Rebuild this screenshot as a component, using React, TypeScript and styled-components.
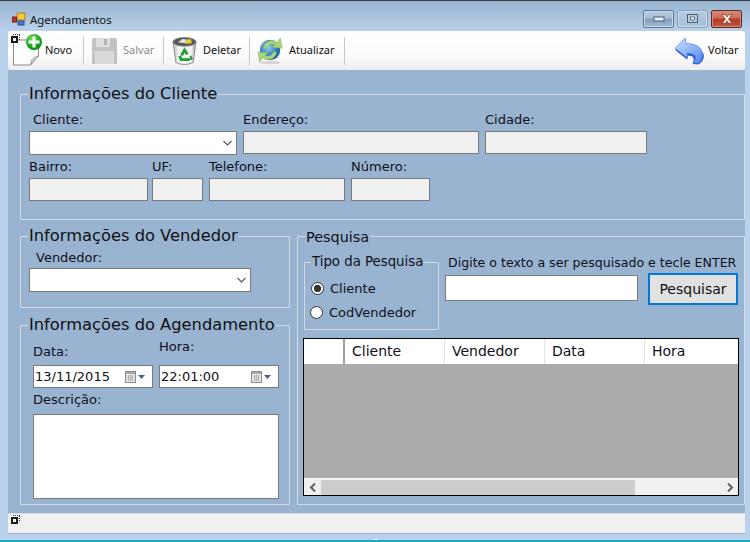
import React from "react";
import styled, { createGlobalStyle } from "styled-components";

const Global = createGlobalStyle`
  html, body { margin: 0; padding: 0; background: #b9d1ea; }
  * { box-sizing: border-box; }
`;

const Win = styled.div`
  position: relative;
  width: 750px;
  height: 542px;
  overflow: hidden;
  display: flex;
  flex-direction: column;
  background: #b9d1ea;
  border-top: 1px solid #3a3f45;
  border-bottom: 2px solid #1aa6c4;
  font-family: "DejaVu Sans", Verdana, sans-serif;
  color: #101018;
`;
const TitleBar = styled.div`
  height: 30px;
  flex: none;
  display: flex;
  align-items: flex-start;
  padding: 11px 8px 0 12px;
  background: linear-gradient(#98b4d0, #b9d1ea);
  font-family: "Noto Sans", sans-serif;
  font-size: 11.4px;
`;
const TitleText = styled.span`
  margin-left: 4px;
  line-height: 16px;
  color: #111;
  flex: 1;
`;
const CaptionGroup = styled.div`
  display: flex;
  gap: 3px;
  margin-top: -2px;
`;
const Caption = styled.div<{ $kind: "min" | "max" | "close" }>`
  width: 31px;
  height: 18px;
  border-radius: 2px;
  display: flex;
  align-items: center;
  justify-content: center;
  border: 1px solid ${(p) => (p.$kind === "close" ? "#5f2a2a" : p.$kind === "min" ? "#5d7690" : "#8aa2ba")};
  box-shadow: inset 0 0 0 1px ${(p) => (p.$kind === "close" ? "#d88a78" : "#c6d8ea")};
  background: ${(p) =>
    p.$kind === "close"
      ? "linear-gradient(#d98f80 0, #c86a56 45%, #b23c22 50%, #c4543a 100%)"
      : p.$kind === "min"
      ? "linear-gradient(#b9cde0 0, #a6bed6 45%, #7f9dbb 50%, #a4bcd4 100%)"
      : "linear-gradient(#b4cbe1 0, #a8c0d9 100%)"};
`;
const Toolbar = styled.div`
  height: 39px;
  flex: none;
  margin: 0 5px 0 8px;
  border-radius: 3px;
  display: flex;
  align-items: center;
  background: linear-gradient(#ffffff 0, #fbfbfb 60%, #eeeeee 100%);
  font-family: "Noto Sans", sans-serif;
  font-size: 11px;
`;
const ToolItem = styled.div<{ $w: number; $gap: number; $pad: number; $off?: boolean }>`
  width: ${(p) => p.$w}px;
  height: 100%;
  flex: none;
  display: flex;
  align-items: center;
  gap: ${(p) => p.$gap}px;
  padding-left: ${(p) => p.$pad}px;
  color: ${(p) => (p.$off ? "#8d8d8d" : "#111")};
`;
const ToolText = styled.span`
  margin-top: -2px;
`;
const ToolSep = styled.div`
  width: 1px;
  height: 28px;
  flex: none;
  background: #c4c6c8;
  box-shadow: 1px 0 0 #fff;
`;
const ToolSpacer = styled.div`
  flex: 1;
`;
const Grip = styled.svg<{ $left: number; $top: number }>`
  position: absolute;
  left: ${(p) => p.$left}px;
  top: ${(p) => p.$top}px;
`;
const Body = styled.div`
  flex: 1;
  min-height: 0;
  margin: 0 5px 0 8px;
  padding: 14px 0 0 12px;
  background: #99b4d1;
  display: flex;
  flex-direction: column;
  gap: 6px;
`;
const Group = styled.fieldset<{ $h: number; $w?: number; $pt?: number; $pl?: number }>`
  margin: 0;
  padding: ${(p) => p.$pt ?? 8}px 0 0 ${(p) => p.$pl ?? 8}px;
  min-width: 0;
  height: ${(p) => p.$h}px;
  width: ${(p) => (p.$w ? `${p.$w}px` : "auto")};
  flex: none;
  border: 1px solid #d3dbe3;
  border-radius: 1px;
`;
const BigLegend = styled.legend`
  margin-left: -1px;
  padding: 0 1px;
  font-size: 16.3px;
  line-height: 20px;
  color: #111;
  white-space: nowrap;
`;
const MidLegend = styled.legend`
  margin-left: 7px;
  padding: 2px 1px 0;
  font-size: 14.4px;
  line-height: 18px;
`;
const SmallLegend = styled.legend`
  margin-left: 0;
  padding: 0 1px;
  font-size: 13.3px;
  line-height: 16px;
  white-space: nowrap;
`;
const FieldRow = styled.div<{ $h: number }>`
  display: flex;
  height: ${(p) => p.$h}px;
  align-items: flex-start;
`;
const Field = styled.div<{ $w: number; $ml?: number; $lift?: number }>`
  width: ${(p) => p.$w}px;
  margin-left: ${(p) => p.$ml ?? 0}px;
  margin-top: ${(p) => -(p.$lift ?? 0)}px;
  flex: none;
`;
const Label = styled.div<{ $indent?: number; $gap?: number; $top?: number }>`
  font-size: 13px;
  line-height: 16px;
  height: 16px;
  white-space: nowrap;
  padding-left: ${(p) => p.$indent ?? 0}px;
  margin-top: ${(p) => p.$top ?? 0}px;
  margin-bottom: ${(p) => p.$gap ?? 3}px;
`;
const ReadOnly = styled.div<{ $h?: number }>`
  height: ${(p) => p.$h ?? 23}px;
  background: #f0f0f0;
  border: 1px solid #7a7a7a;
`;
const Combo = styled.div`
  height: 24px;
  background: #fff;
  border: 1px solid #7a7a7a;
  display: flex;
  align-items: center;
  justify-content: flex-end;
  padding-right: 4px;
`;
const DateBox = styled.div`
  height: 23px;
  width: 120px;
  background: #fff;
  border: 1px solid #7a7a7a;
  display: flex;
  align-items: center;
  padding: 0 6px 0 1px;
  font-size: 13px;
  justify-content: space-between;
`;
const Memo = styled.div`
  width: 246px;
  height: 85px;
  background: #fff;
  border: 1px solid #7a7a7a;
`;
const Columns = styled.div`
  display: flex;
  gap: 7px;
`;
const LeftCol = styled.div`
  width: 270px;
  flex: none;
  display: flex;
  flex-direction: column;
  gap: 7px;
`;
const DateRow = styled.div`
  display: flex;
  gap: 6px;
  padding-left: 4px;
`;
const SearchTop = styled.div`
  display: flex;
  align-items: flex-start;
`;
const TipoGroup = styled.fieldset`
  margin: 0 0 0 6px;
  padding: 6px 0 0 6px;
  width: 135px;
  height: 76px;
  flex: none;
  border: 1px solid #d3dbe3;
  border-radius: 1px;
  min-width: 0;
`;
const RadioRow = styled.label<{ $ml?: number }>`
  display: flex;
  align-items: center;
  gap: 6px;
  height: 24px;
  font-size: 13px;
  margin-left: ${(p) => p.$ml ?? 0}px;
`;
const RadioDot = styled.span<{ $on?: boolean }>`
  width: 13px;
  height: 13px;
  flex: none;
  border-radius: 50%;
  border: 1px solid #333;
  background: ${(p) => (p.$on ? "radial-gradient(circle, #333 0 3.4px, #fff 3.9px)" : "#fff")};
`;
const SearchBlock = styled.div`
  margin-left: 6px;
`;
const SearchLabel = styled.div`
  font-size: 12.57px;
  line-height: 16px;
  margin: 1px 0 0 3px;
  white-space: nowrap;
`;
const SearchLine = styled.div`
  display: flex;
  align-items: center;
  gap: 10px;
`;
const SearchInput = styled.div`
  width: 193px;
  height: 26px;
  background: #fff;
  border: 1px solid #7a7a7a;
`;
const SearchBtn = styled.div`
  width: 90px;
  height: 32px;
  margin-top: 2px;
  background: #e1e1e1;
  border: 2px solid #0078d7;
  font-size: 14px;
  display: flex;
  align-items: center;
  justify-content: center;
`;
const Grid = styled.div`
  margin: 8px 0 0 5px;
  width: 436px;
  height: 158px;
  border: 1px solid #000;
  background: #ababab;
  display: flex;
  flex-direction: column;
`;
const GridHead = styled.div`
  height: 25px;
  flex: none;
  display: flex;
  background: #fff;
`;
const GridCell = styled.div<{ $w: number; $strong?: boolean; $last?: boolean }>`
  width: ${(p) => p.$w}px;
  flex: none;
  padding-left: 7px;
  font-size: 14px;
  line-height: 25px;
  border-right: ${(p) => (p.$last ? "none" : p.$strong ? "2px solid #a0a0a0" : "1px solid #e3e3e3")};
`;
const GridFill = styled.div`
  flex: 1;
`;
const ScrollBar = styled.div`
  height: 17px;
  flex: none;
  display: flex;
  align-items: center;
  background: #f0f0f0;
  border-top: 1px solid #fff;
`;
const ScrollBtn = styled.div`
  width: 17px;
  height: 100%;
  flex: none;
  display: flex;
  align-items: center;
  justify-content: center;
`;
const ScrollThumb = styled.div`
  width: 314px;
  height: 15px;
  background: #cdcdcd;
  flex: none;
`;
const ScrollRest = styled.div`
  flex: 1;
`;
const StatusBar = styled.div`
  height: 21px;
  flex: none;
  margin: 0 5px 0 8px;
  background: #f0f0f0;
  border-top: 1px solid #d8dce0;
  border-bottom: 1px solid #9fb6cf;
`;
const FrameFoot = styled.div`
  flex: none;
  height: 6px;
`;
const Blip = styled.div`
  position: absolute;
  left: 373px;
  bottom: 0;
  width: 5px;
  height: 1px;
  background: #fff;
`;

const AppIcon = () => (
  <svg width="14" height="14" viewBox="0 0 14 14">
    <rect x="5" y="1" width="8" height="7" fill="#f6c93c" stroke="#a8802a" />
    <rect x="0.5" y="5" width="4" height="5" fill="#c8302a" stroke="#7a2020" />
    <rect x="6" y="9" width="6" height="4" fill="#4a78d0" stroke="#2a4a90" />
  </svg>
);
const MinGlyph = () => (
  <svg width="12" height="6" viewBox="0 0 12 6">
    <rect x="1" y="1" width="10" height="4" fill="#eef3f8" stroke="#4d5d70" />
  </svg>
);
const MaxGlyph = () => (
  <svg width="12" height="10" viewBox="0 0 12 10">
    <rect x="0.5" y="0.5" width="10" height="8" fill="#b7cce0" stroke="#4d5d70" />
    <rect x="3.5" y="3" width="4" height="3" fill="#e6eef6" stroke="#4d5d70" strokeWidth="0.8" />
  </svg>
);
const CloseGlyph = () => (
  <svg width="14" height="10" viewBox="0 0 14 10">
    <path d="M2 0.5 L5 0.5 L7 3 L9 0.5 L12 0.5 L8.6 5 L12 9.5 L9 9.5 L7 7 L5 9.5 L2 9.5 L5.4 5 Z" fill="#f6efec" stroke="#6a2a20" strokeWidth="0.6" />
  </svg>
);
const GripIcon = ({ left, top }: { left: number; top: number }) => (
  <Grip $left={left} $top={top} width="11" height="11" viewBox="0 0 11 11">
    <rect x="2" y="4" width="5" height="5" fill="#fff" stroke="#1a1a1a" strokeWidth="2" />
    <path d="M3 1.5h8M9.5 2v6" stroke="#333" strokeWidth="1" strokeDasharray="1 1" fill="none" />
  </Grip>
);
const NewIcon = () => (
  <svg width="31" height="33" viewBox="0 0 31 33" style={{ marginTop: -2 }}>
    <defs>
      <radialGradient id="gr" cx="0.4" cy="0.3" r="0.8">
        <stop offset="0" stopColor="#7be05a" />
        <stop offset="0.6" stopColor="#16a81c" />
        <stop offset="1" stopColor="#067a12" />
      </radialGradient>
    </defs>
    <path d="M1.5 7 H26.5 V23 L18.5 32 H1.5 Z" fill="#fdfdfd" stroke="#8a8a8a" />
    <path d="M26.5 23 C24 24 19 24 18.5 32 C20 28 23 28 26.5 23 Z" fill="#d6d6d6" stroke="#8a8a8a" strokeWidth="0.7" />
    <circle cx="22" cy="9" r="8" fill="url(#gr)" />
    <path d="M20.5 3.5h3v4h4v3h-4v4h-3v-4h-4v-3h4z" fill="#fff" />
  </svg>
);
const SaveIcon = () => (
  <svg width="25" height="26" viewBox="0 0 25 26">
    <path d="M0 2 Q0 0 2 0 H23 Q25 0 25 2 V26 H0 Z" fill="#c2c2c2" />
    <rect x="4" y="0" width="14" height="9" fill="#dedede" />
    <rect x="3" y="13" width="19" height="13" fill="#dadada" />
    <rect x="12" y="1" width="3" height="6" fill="#b4b4b4" />
  </svg>
);
const BinIcon = () => (
  <svg width="25" height="30" viewBox="0 0 26 30">
    <defs>
      <linearGradient id="bn" x1="0" x2="1">
        <stop offset="0" stopColor="#b9b9b9" />
        <stop offset="0.3" stopColor="#fff" />
        <stop offset="0.8" stopColor="#f0f0f0" />
        <stop offset="1" stopColor="#999" />
      </linearGradient>
    </defs>
    <path d="M1 5 L4 27 Q13 31 22 27 L25 5 Z" fill="url(#bn)" stroke="#777" strokeWidth="0.8" />
    <ellipse cx="13" cy="5.5" rx="12" ry="4.5" fill="#555" stroke="#8a8a8a" />
    <path d="M6 6 L11 2.5 L15 3 L14 7 Z" fill="#dce4ee" />
    <path d="M15 3 L20 2.8 L20.5 7 L14 7.5 Z" fill="#e8d22a" />
    <g stroke="#1fa033" strokeWidth="3" fill="none">
      <path d="M10 19.5 L13 14 L16 18.5" />
      <path d="M8 20 L9.5 24 H18" />
      <path d="M19 20 L20.5 23 L17 24" strokeWidth="2" />
    </g>
  </svg>
);
const RefreshIcon = () => (
  <svg width="26" height="28" viewBox="0 0 28 30">
    <defs>
      <radialGradient id="gl" cx="0.4" cy="0.35" r="0.7">
        <stop offset="0" stopColor="#9fd0f0" />
        <stop offset="0.6" stopColor="#2f7fc8" />
        <stop offset="1" stopColor="#1a4f98" />
      </radialGradient>
    </defs>
    <ellipse cx="14" cy="27.5" rx="11" ry="1.8" fill="#d4d4d4" />
    <circle cx="14" cy="14" r="11" fill="url(#gl)" />
    <path d="M7 11 C9 3 18 2 22 6 L25 1 L27 12 L16 11 L19.5 8.5 C16 6.5 11 8 10 13 Z" fill="#a8d67a" stroke="#7fb05a" strokeWidth="0.6" />
    <path d="M21 17 C19 25 10 26 6 22 L3 27 L1 16 L12 17 L8.5 19.5 C12 21.5 17 20 18 15 Z" fill="#a8d67a" stroke="#7fb05a" strokeWidth="0.6" />
  </svg>
);
const BackIcon = () => (
  <svg width="30" height="28" viewBox="0 0 32 30">
    <defs>
      <linearGradient id="bk" x1="0" y1="0" x2="1" y2="1">
        <stop offset="0" stopColor="#c6dcff" />
        <stop offset="0.6" stopColor="#86b0fa" />
        <stop offset="1" stopColor="#4f7ee8" />
      </linearGradient>
    </defs>
    <path d="M1 13 L3 15.5 L14 24 L15 20 C19 20 21 21 21 24 L20 29 L26 29.5 C30 27 32 24 32 20 C31 14 24 10 15 10 Z" fill="#2f5fd8" />
    <path d="M1 12 L12 1 L13 7 C23 7 30.5 11 30.5 19 C30.5 23 29 26 26 28 L20.5 27.5 L23 23 C23.5 19.5 20 17.5 14 17.5 L14.5 22.5 Z" fill="url(#bk)" stroke="#3f6fe0" strokeWidth="0.6" />
  </svg>
);
const Chevron = () => (
  <svg width="9" height="6" viewBox="0 0 9 6">
    <path d="M0.5 1 L4.5 5 L8.5 1" fill="none" stroke="#555" strokeWidth="1.1" />
  </svg>
);
const CalIcon = () => (
  <svg width="21" height="12" viewBox="0 0 21 12">
    <rect x="0.5" y="0.5" width="10" height="11" fill="#e8e8e8" stroke="#8a8a8a" />
    <rect x="1" y="1" width="9" height="2" fill="#a9a9a9" />
    <path d="M2.5 5h6M2.5 7h6M2.5 9h6M3.5 4v6M5.5 4v6M7.5 4v6" stroke="#b0b0b0" strokeWidth="0.8" />
    <path d="M13 4 H20 L16.5 8 Z" fill="#4f5f80" />
  </svg>
);
const ArrowLeft = () => (
  <svg width="8" height="9" viewBox="0 0 8 9">
    <path d="M6 0.5 L2 4.5 L6 8.5" fill="none" stroke="#606060" strokeWidth="2" />
  </svg>
);
const ArrowRight = () => (
  <svg width="8" height="9" viewBox="0 0 8 9">
    <path d="M2 0.5 L6 4.5 L2 8.5" fill="none" stroke="#606060" strokeWidth="2" />
  </svg>
);

export default function App() {
  return (
    <>
      <Global />
      <Win>
        <TitleBar>
          <AppIcon />
          <TitleText>Agendamentos</TitleText>
          <CaptionGroup>
            <Caption $kind="min"><MinGlyph /></Caption>
            <Caption $kind="max"><MaxGlyph /></Caption>
            <Caption $kind="close"><CloseGlyph /></Caption>
          </CaptionGroup>
        </TitleBar>
        <Toolbar>
          <ToolItem $w={75} $gap={2} $pad={4}><NewIcon /><ToolText>Novo</ToolText></ToolItem>
          <ToolSep />
          <ToolItem $w={79} $gap={6} $pad={8} $off><SaveIcon /><ToolText>Salvar</ToolText></ToolItem>
          <ToolSep />
          <ToolItem $w={85} $gap={6} $pad={8}><BinIcon /><ToolText>Deletar</ToolText></ToolItem>
          <ToolSep />
          <ToolItem $w={94} $gap={6} $pad={7}><RefreshIcon /><ToolText>Atualizar</ToolText></ToolItem>
          <ToolSep />
          <ToolSpacer />
          <ToolItem $w={73} $gap={4} $pad={2}><BackIcon /><ToolText>Voltar</ToolText></ToolItem>
        </Toolbar>
        <GripIcon left={10} top={32} />
        <Body>
          <Group $h={136}>
            <BigLegend>Informações do Cliente</BigLegend>
            <FieldRow $h={47}>
              <Field $w={208}><Label $indent={4}>Cliente:</Label><Combo><Chevron /></Combo></Field>
              <Field $w={236} $ml={6}><Label>Endereço:</Label><ReadOnly /></Field>
              <Field $w={162} $ml={6}><Label>Cidade:</Label><ReadOnly /></Field>
            </FieldRow>
            <FieldRow $h={43}>
              <Field $w={119}><Label>Bairro:</Label><ReadOnly /></Field>
              <Field $w={51} $ml={4}><Label>UF:</Label><ReadOnly /></Field>
              <Field $w={136} $ml={6}><Label>Telefone:</Label><ReadOnly /></Field>
              <Field $w={79} $ml={6}><Label>Número:</Label><ReadOnly /></Field>
            </FieldRow>
          </Group>
          <Columns>
            <LeftCol>
              <Group $h={82} $pt={4}>
                <BigLegend>Informações do Vendedor</BigLegend>
                <Field $w={222}><Label $indent={7} $gap={2}>Vendedor:</Label><Combo><Chevron /></Combo></Field>
              </Group>
              <Group $h={190} $pt={9}>
                <BigLegend>Informações do Agendamento</BigLegend>
                <DateRow>
                  <Field $w={120}><Label $gap={5}>Data:</Label><DateBox>13/11/2015<CalIcon /></DateBox></Field>
                  <Field $w={120} $lift={5}><Label $gap={10}>Hora:</Label><DateBox>22:01:00<CalIcon /></DateBox></Field>
                </DateRow>
                <Field $w={246} $ml={4}>
                  <Label $top={4} $gap={6}>Descrição:</Label>
                  <Memo />
                </Field>
              </Group>
            </LeftCol>
            <Group $h={279} $w={448} $pt={8} $pl={0}>
              <MidLegend>Pesquisa</MidLegend>
              <SearchTop>
                <TipoGroup>
                  <SmallLegend>Tipo da Pesquisa</SmallLegend>
                  <RadioRow><RadioDot $on />Cliente</RadioRow>
                  <RadioRow $ml={-1}><RadioDot />CodVendedor</RadioRow>
                </TipoGroup>
                <SearchBlock>
                  <SearchLabel>Digite o texto a ser pesquisado e tecle ENTER</SearchLabel>
                  <SearchLine>
                    <SearchInput />
                    <SearchBtn>Pesquisar</SearchBtn>
                  </SearchLine>
                </SearchBlock>
              </SearchTop>
              <Grid>
                <GridHead>
                  <GridCell $w={41} $strong />
                  <GridCell $w={100}>Cliente</GridCell>
                  <GridCell $w={100}>Vendedor</GridCell>
                  <GridCell $w={100}>Data</GridCell>
                  <GridCell $w={93} $last>Hora</GridCell>
                </GridHead>
                <GridFill />
                <ScrollBar>
                  <ScrollBtn><ArrowLeft /></ScrollBtn>
                  <ScrollThumb />
                  <ScrollRest />
                  <ScrollBtn><ArrowRight /></ScrollBtn>
                </ScrollBar>
              </Grid>
            </Group>
          </Columns>
        </Body>
        <StatusBar />
        <GripIcon left={10} top={513} />
        <FrameFoot />
        <Blip />
      </Win>
    </>
  );
}
